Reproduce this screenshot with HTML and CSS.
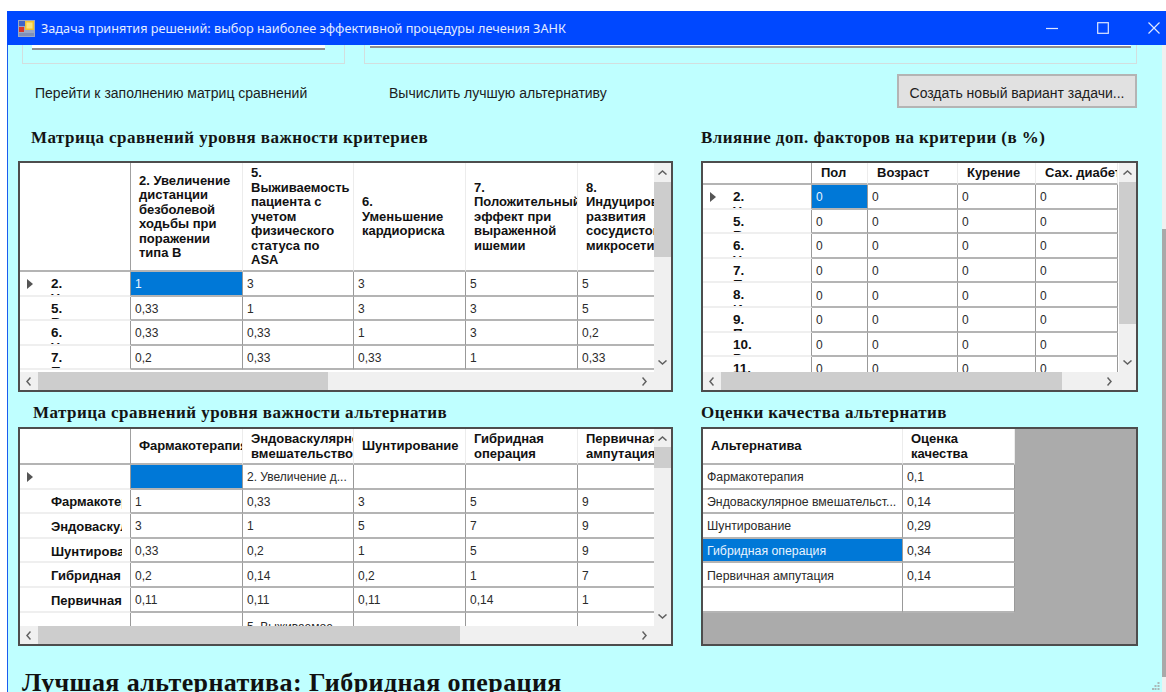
FILE: index.html
```html
<!DOCTYPE html>
<html lang="ru">
<head>
<meta charset="utf-8">
<title>Задача принятия решений</title>
<link rel="stylesheet" href="styles.css">
</head>
<body>
<div class="window">
  <header class="titlebar">
    <svg class="app-icon" width="17" height="17" viewBox="0 0 17 17">
      <rect x="0" y="0" width="17" height="17" fill="#9aa7c4"/>
      <rect x="1" y="1" width="6" height="5" fill="#3f63c8"/>
      <rect x="7" y="1" width="9" height="9" fill="#f2c230"/>
      <rect x="8.500" y="2.500" width="6" height="6" fill="#fbe27c"/>
      <rect x="1" y="7" width="5" height="5" fill="#d8362a"/>
      <rect x="1" y="13" width="15" height="3" fill="#7f8fb8"/>
    </svg>
    <span class="title-text">Задача принятия решений: выбор наиболее эффективной процедуры лечения ЗАНК</span>
    <div class="caption-buttons">
      <svg width="12" height="12" viewBox="0 0 12 12"><path d="M0 6.500H12" stroke="#dfe8ff" stroke-width="1.200"/></svg>
      <svg width="12" height="12" viewBox="0 0 12 12"><rect x=".7" y=".7" width="10.600" height="10.600" fill="none" stroke="#dfe8ff" stroke-width="1.200"/></svg>
      <svg width="12" height="12" viewBox="0 0 12 12"><path d="M.5.500L11.500 11.500M11.500.500L.5 11.500" stroke="#dfe8ff" stroke-width="1.200"/></svg>
    </div>
  </header>
  <div class="client">
    <main class="content">
      <div class="groups">
        <div class="group group-left"><div class="field"></div></div>
        <div class="group group-right"><div class="field"></div></div>
      </div>
      <div class="actions">
        <button class="flat-button">Перейти к заполнению матриц сравнений</button>
        <button class="flat-button">Вычислить лучшую альтернативу</button>
        <button class="push-button">Создать новый вариант задачи...</button>
      </div>
      <div class="panels">
        <section class="panel">
          <h2 class="heading heading-first">Матрица сравнений уровня важности критериев</h2>
          <div class="dgv dgv-short">
            <div class="viewport cols-criteria rows-tall">
              <div class="head corner"></div>
              <div class="head"><span>2. Увеличение<br>дистанции<br>безболевой<br>ходьбы при<br>поражении<br>типа В</span></div>
              <div class="head"><span>5.<br>Выживаемость<br>пациента с<br>учетом<br>физического<br>статуса по<br>ASA</span></div>
              <div class="head"><span>6.<br>Уменьшение<br>кардиориска</span></div>
              <div class="head"><span>7.<br>Положительный<br>эффект при<br>выраженной<br>ишемии</span></div>
              <div class="head"><span>8.<br>Индуцирование<br>развития<br>сосудистой<br>микросети</span></div>

              <div class="row-head wrapped current">2.<br>Увеличение</div>
              <div class="cell selected">1</div><div class="cell">3</div><div class="cell">3</div><div class="cell">5</div><div class="cell">5</div>
              <div class="row-head wrapped">5.<br>Выживаемость</div>
              <div class="cell">0,33</div><div class="cell">1</div><div class="cell">3</div><div class="cell">3</div><div class="cell">5</div>
              <div class="row-head wrapped">6.<br>Уменьшение</div>
              <div class="cell">0,33</div><div class="cell">0,33</div><div class="cell">1</div><div class="cell">3</div><div class="cell">0,2</div>
              <div class="row-head wrapped">7.<br>Положительный</div>
              <div class="cell">0,2</div><div class="cell">0,33</div><div class="cell">0,33</div><div class="cell">1</div><div class="cell">0,33</div>
            </div>
            <div class="vbar">
              <svg class="arrow" width="9" height="5" viewBox="0 0 9 5"><path d="M.5 4.500L4.500 1L8.500 4.500" fill="none" stroke="#606060" stroke-width="1.500"/></svg>
              <div class="vthumb vthumb-a"></div>
              <svg class="arrow arrow-end" width="9" height="5" viewBox="0 0 9 5"><path d="M.5.500L4.500 4L8.500.500" fill="none" stroke="#606060" stroke-width="1.500"/></svg>
            </div>
            <div class="hbar">
              <svg class="harrow" width="5" height="9" viewBox="0 0 5 9"><path d="M4.500.500L1 4.500L4.500 8.500" fill="none" stroke="#606060" stroke-width="1.500"/></svg>
              <div class="hthumb hthumb-a"></div>
              <svg class="harrow harrow-end" width="5" height="9" viewBox="0 0 5 9"><path d="M.5.500L4 4.500L.5 8.500" fill="none" stroke="#606060" stroke-width="1.500"/></svg>
            </div>
            <div class="sizer"></div>
          </div>
        </section>

        <section class="panel">
          <h2 class="heading heading-first heading-right">Влияние доп. факторов на критерии (в %)</h2>
          <div class="dgv dgv-short">
            <div class="viewport cols-factors rows-low">
              <div class="head corner"></div>
              <div class="head"><span>Пол</span></div>
              <div class="head"><span>Возраст</span></div>
              <div class="head"><span>Курение</span></div>
              <div class="head"><span>Сах. диабет</span></div>

              <div class="row-head wrapped narrow current">2.<br>Увеличение</div>
              <div class="cell selected">0</div><div class="cell">0</div><div class="cell">0</div><div class="cell">0</div>
              <div class="row-head wrapped narrow">5.<br>Выживаемость</div>
              <div class="cell">0</div><div class="cell">0</div><div class="cell">0</div><div class="cell">0</div>
              <div class="row-head wrapped narrow">6.<br>Уменьшение</div>
              <div class="cell">0</div><div class="cell">0</div><div class="cell">0</div><div class="cell">0</div>
              <div class="row-head wrapped narrow">7.<br>Положительный</div>
              <div class="cell">0</div><div class="cell">0</div><div class="cell">0</div><div class="cell">0</div>
              <div class="row-head wrapped narrow">8.<br>Индуцирование</div>
              <div class="cell">0</div><div class="cell">0</div><div class="cell">0</div><div class="cell">0</div>
              <div class="row-head wrapped narrow">9.<br>Первичная</div>
              <div class="cell">0</div><div class="cell">0</div><div class="cell">0</div><div class="cell">0</div>
              <div class="row-head wrapped narrow">10.<br>Риск</div>
              <div class="cell">0</div><div class="cell">0</div><div class="cell">0</div><div class="cell">0</div>
              <div class="row-head wrapped narrow">11.<br>Риск</div>
              <div class="cell">0</div><div class="cell">0</div><div class="cell">0</div><div class="cell">0</div>
            </div>
            <div class="vbar">
              <svg class="arrow" width="9" height="5" viewBox="0 0 9 5"><path d="M.5 4.500L4.500 1L8.500 4.500" fill="none" stroke="#606060" stroke-width="1.500"/></svg>
              <div class="vthumb vthumb-b"></div>
              <svg class="arrow arrow-end" width="9" height="5" viewBox="0 0 9 5"><path d="M.5.500L4.500 4L8.500.500" fill="none" stroke="#606060" stroke-width="1.500"/></svg>
            </div>
            <div class="hbar">
              <svg class="harrow" width="5" height="9" viewBox="0 0 5 9"><path d="M4.500.500L1 4.500L4.500 8.500" fill="none" stroke="#606060" stroke-width="1.500"/></svg>
              <div class="hthumb hthumb-b"></div>
              <svg class="harrow harrow-end" width="5" height="9" viewBox="0 0 5 9"><path d="M.5.500L4 4.500L.5 8.500" fill="none" stroke="#606060" stroke-width="1.500"/></svg>
            </div>
            <div class="sizer"></div>
          </div>
        </section>

        <section class="panel">
          <h2 class="heading heading-second">Матрица сравнений уровня важности альтернатив</h2>
          <div class="dgv dgv-lower">
            <div class="viewport cols-criteria rows-mid">
              <div class="head corner"></div>
              <div class="head"><span>Фармакотерапия</span></div>
              <div class="head"><span>Эндоваскулярное<br>вмешательство</span></div>
              <div class="head"><span>Шунтирование</span></div>
              <div class="head"><span>Гибридная<br>операция</span></div>
              <div class="head"><span>Первичная<br>ампутация</span></div>

              <div class="row-head current"></div>
              <div class="cell selected"></div><div class="cell">2. Увеличение д...</div><div class="cell"></div><div class="cell"></div><div class="cell"></div>
              <div class="row-head"><span class="row-label">Фармакотерапия</span></div>
              <div class="cell">1</div><div class="cell">0,33</div><div class="cell">3</div><div class="cell">5</div><div class="cell">9</div>
              <div class="row-head"><span class="row-label">Эндоваскулярное</span></div>
              <div class="cell">3</div><div class="cell">1</div><div class="cell">5</div><div class="cell">7</div><div class="cell">9</div>
              <div class="row-head"><span class="row-label">Шунтирование</span></div>
              <div class="cell">0,33</div><div class="cell">0,2</div><div class="cell">1</div><div class="cell">5</div><div class="cell">9</div>
              <div class="row-head"><span class="row-label">Гибридная</span></div>
              <div class="cell">0,2</div><div class="cell">0,14</div><div class="cell">0,2</div><div class="cell">1</div><div class="cell">7</div>
              <div class="row-head"><span class="row-label">Первичная</span></div>
              <div class="cell">0,11</div><div class="cell">0,11</div><div class="cell">0,11</div><div class="cell">0,14</div><div class="cell">1</div>
              <div class="row-head"></div>
              <div class="cell"></div><div class="cell cell-low">5. Выживаемое...</div><div class="cell"></div><div class="cell"></div><div class="cell"></div>
            </div>
            <div class="vbar">
              <svg class="arrow" width="9" height="5" viewBox="0 0 9 5"><path d="M.5 4.500L4.500 1L8.500 4.500" fill="none" stroke="#606060" stroke-width="1.500"/></svg>
              <div class="vthumb vthumb-c"></div>
              <svg class="arrow arrow-end" width="9" height="5" viewBox="0 0 9 5"><path d="M.5.500L4.500 4L8.500.500" fill="none" stroke="#606060" stroke-width="1.500"/></svg>
            </div>
            <div class="hbar">
              <svg class="harrow" width="5" height="9" viewBox="0 0 5 9"><path d="M4.500.500L1 4.500L4.500 8.500" fill="none" stroke="#606060" stroke-width="1.500"/></svg>
              <div class="hthumb hthumb-c"></div>
              <svg class="harrow harrow-end" width="5" height="9" viewBox="0 0 5 9"><path d="M.5.500L4 4.500L.5 8.500" fill="none" stroke="#606060" stroke-width="1.500"/></svg>
            </div>
            <div class="sizer"></div>
          </div>
        </section>

        <section class="panel">
          <h2 class="heading heading-second heading-right">Оценки качества альтернатив</h2>
          <div class="dgv dgv-lower dgv-plain">
            <div class="viewport cols-scores rows-mid">
              <div class="head"><span>Альтернатива</span></div>
              <div class="head"><span>Оценка<br>качества</span></div>
              <div class="cell">Фармакотерапия</div><div class="cell">0,1</div>
              <div class="cell">Эндоваскулярное вмешательст...</div><div class="cell">0,14</div>
              <div class="cell">Шунтирование</div><div class="cell">0,29</div>
              <div class="cell selected">Гибридная операция</div><div class="cell">0,34</div>
              <div class="cell">Первичная ампутация</div><div class="cell">0,14</div>
              <div class="cell"></div><div class="cell"></div>
            </div>
          </div>
        </section>
      </div>
      <p class="best">Лучшая альтернатива: Гибридная операция</p>
      <svg class="grip" width="8" height="8" viewBox="0 0 8 8" fill="#a9b8b8">
        <rect x="5.500" y="0" width="2" height="2"/><rect x="5.500" y="3" width="2" height="2"/><rect x="5.500" y="6" width="2" height="2"/>
        <rect x="2.500" y="3" width="2" height="2"/><rect x="2.500" y="6" width="2" height="2"/><rect x="0" y="6" width="2" height="2"/>
      </svg>
    </main>
    <div class="page-scrollbar"><div class="page-thumb"></div></div>
  </div>
</div>
</body>
</html>
```

FILE: styles.css
```css
* {
  box-sizing: border-box;
}

html,
body {
  height: 692px;
  margin: 0;
  overflow: hidden;
  background: #fff;
}

body {
  padding: 11px 0 0 7px;
  font-family: "Liberation Sans", Arial, sans-serif;
  font-size: 12px;
  color: #1c1c1c;
}

.window {
  display: flex;
  flex-direction: column;
  height: 681px;
  border-left: 1px solid #1a5cf0;
}

/* Caption bar */
.titlebar {
  display: flex;
  flex: none;
  align-items: center;
  height: 34px;
  margin-left: -1px;
  padding: 0 6px 0 11px;
  background: #0048ff;
  color: #e4ecff;
}

.app-icon {
  flex: none;
  margin-right: 6px;
}

.title-text {
  font-family: "Noto Sans", sans-serif;
  font-size: 12.700px;
  white-space: nowrap;
}

.caption-buttons {
  display: flex;
  gap: 39px;
  align-items: center;
  margin-left: auto;
}

/* Client area */
.client {
  display: flex;
  flex: 1;
  min-height: 0;
}

.content {
  position: relative;
  flex: 1;
  min-width: 0;
  overflow: hidden;
  background: #bfffff;
}

.page-scrollbar {
  flex: none;
  width: 4px;
  padding-top: 184px;
  background: #f0f0f0;
}

.page-thumb {
  height: 448px;
  background: #a9a9a9;
}

.groups {
  display: flex;
  gap: 19px;
  height: 19px;
  margin: 0 25px 0 14px;
}

.group {
  border: 1px solid #d3dede;
  border-top: 0;
}

.group-left {
  flex: none;
  width: 323px;
  padding: 0 19px 0 9px;
}

.group-right {
  flex: 1;
  padding: 0 5px;
}

.field {
  background: #fff;
  border-bottom: 2px solid #8f8f8f;
}

.group-left .field {
  height: 5px;
}

.group-right .field {
  height: 3px;
}

.actions {
  display: flex;
  align-items: center;
  height: 44px;
  padding: 10px 25px 0 27px;
}

.flat-button {
  flex: none;
  width: 354px;
  height: 34px;
  padding: 4px 0 0;
  border: 0;
  background: none;
  font: 14px "Liberation Sans", Arial, sans-serif;
  color: #1c1c1c;
  text-align: left;
}

.push-button {
  flex: none;
  width: 240px;
  height: 34px;
  margin-left: auto;
  padding: 4px 0 0;
  border: 2px solid #b4b4b4;
  background: #e1e1e1;
  font: 14px "Liberation Sans", Arial, sans-serif;
  color: #1c1c1c;
}

.panels {
  display: grid;
  grid-template-columns: 655px 437px;
  column-gap: 28px;
  margin-left: 10px;
}

.heading {
  margin: 0;
  font: bold 17px/18px "Liberation Serif", "Times New Roman", serif;
  letter-spacing: .45px;
  color: #141414;
  white-space: nowrap;
}

.heading-first {
  height: 53px;
  padding: 21px 0 0 13px;
}

.heading-second {
  height: 35px;
  padding: 12px 0 0 15px;
}

.heading-right {
  padding-left: 0;
}

/* Data grid */
.dgv {
  display: grid;
  grid-template-columns: minmax(0, 1fr) 17px;
  grid-template-rows: minmax(0, 1fr) 18px;
  border: 2px solid #4d4d4d;
  background: #fff;
}

.dgv-short {
  height: 231px;
}

.dgv-lower {
  height: 219px;
}

.dgv-plain {
  display: block;
  background: #ababab;
}

.viewport {
  display: grid;
  grid-auto-rows: 24.600px;
  align-content: start;
  justify-content: start;
  min-height: 0;
  overflow: hidden;
}

.cols-criteria {
  grid-template-columns: 111px 112px 111px 112px 112px 112px;
}

.cols-factors {
  grid-template-columns: 109px 56px 90px 78px 82px;
}

.cols-scores {
  grid-template-columns: 200px 112px;
}

.rows-tall {
  grid-template-rows: 109px;
}

.rows-low {
  grid-template-rows: 22px;
}

.rows-mid {
  grid-template-rows: 36px;
}

.head {
  display: flex;
  align-items: center;
  padding: 1px 0 0 8px;
  overflow: hidden;
  border-right: 1px solid #ececec;
  border-bottom: 2px solid #b4b4b4;
  background: #fff;
  font-weight: bold;
  font-size: 13px;
  line-height: 14.500px;
  color: #111;
  white-space: nowrap;
}

.cols-factors .head {
  padding-left: 9px;
}

.corner {
  border-right-color: #a0a0a0;
}

.cell {
  display: flex;
  align-items: center;
  padding: 2px 0 0 4px;
  overflow: hidden;
  border-right: 1px solid #999;
  border-bottom: 2px solid #b4b4b4;
  background: #fff;
  white-space: nowrap;
  color: #2a2a2a;
}

.cell.selected {
  background: #0078d7;
  color: #e8f4ff;
}

/* Text of the row that the scrolled area cuts through */
.cell-low {
  padding-top: 7px;
}

.dgv-plain .cell {
  font-size: 12.300px;
}

.row-head {
  position: relative;
  display: flex;
  align-items: center;
  padding: 2px 8px 0 31px;
  overflow: hidden;
  border-right: 1px solid #999;
  border-bottom: 2px solid #efefef;
  background: #fff;
  font-weight: bold;
  font-size: 13px;
  color: #111;
  white-space: nowrap;
}

.row-label {
  flex: 1;
  min-width: 0;
  overflow: hidden;
}

.row-head.wrapped {
  display: block;
  padding-top: 5px;
  font-size: 13.500px;
  line-height: 14.500px;
}

.row-head.narrow {
  padding-left: 30px;
}

/* Marker of the current row */
.row-head.current::before {
  content: "";
  position: absolute;
  top: 7px;
  left: 7px;
  border-top: 5px solid transparent;
  border-bottom: 5px solid transparent;
  border-left: 6px solid #555;
}

/* Scroll bars inside the grids */
.vbar {
  display: flex;
  flex-direction: column;
  align-items: center;
  background: #f0f0f0;
}

.arrow {
  flex: none;
  margin-top: 7px;
}

.arrow-end {
  margin-top: auto;
  margin-bottom: 7px;
}

.vthumb {
  flex: none;
  width: 100%;
  background: #cdcdcd;
}

.vthumb-a {
  height: 75px;
  margin-top: 7px;
}

.vthumb-b {
  height: 142px;
  margin-top: 7px;
}

.vthumb-c {
  height: 21px;
  margin-top: 6px;
}

.hbar {
  display: flex;
  align-items: center;
  height: 18px;
  padding-left: 6px;
  background: #f0f0f0;
}

.harrow {
  flex: none;
}

.harrow-end {
  margin-left: auto;
  margin-right: 7px;
}

.hthumb {
  align-self: stretch;
  margin-left: 7px;
  background: #cdcdcd;
}

.hthumb-a {
  width: 290px;
}

.hthumb-b {
  width: 341px;
}

.hthumb-c {
  width: 422px;
}

.sizer {
  background: #f0f0f0;
}

.best {
  margin: 22px 0 0 14px;
  font: bold 26px/30px "Liberation Serif", "Times New Roman", serif;
  letter-spacing: .4px;
  color: #111;
  white-space: nowrap;
}

/* Resize grip in the window corner */
.grip {
  position: absolute;
  right: 2px;
  bottom: 2px;
}
```
